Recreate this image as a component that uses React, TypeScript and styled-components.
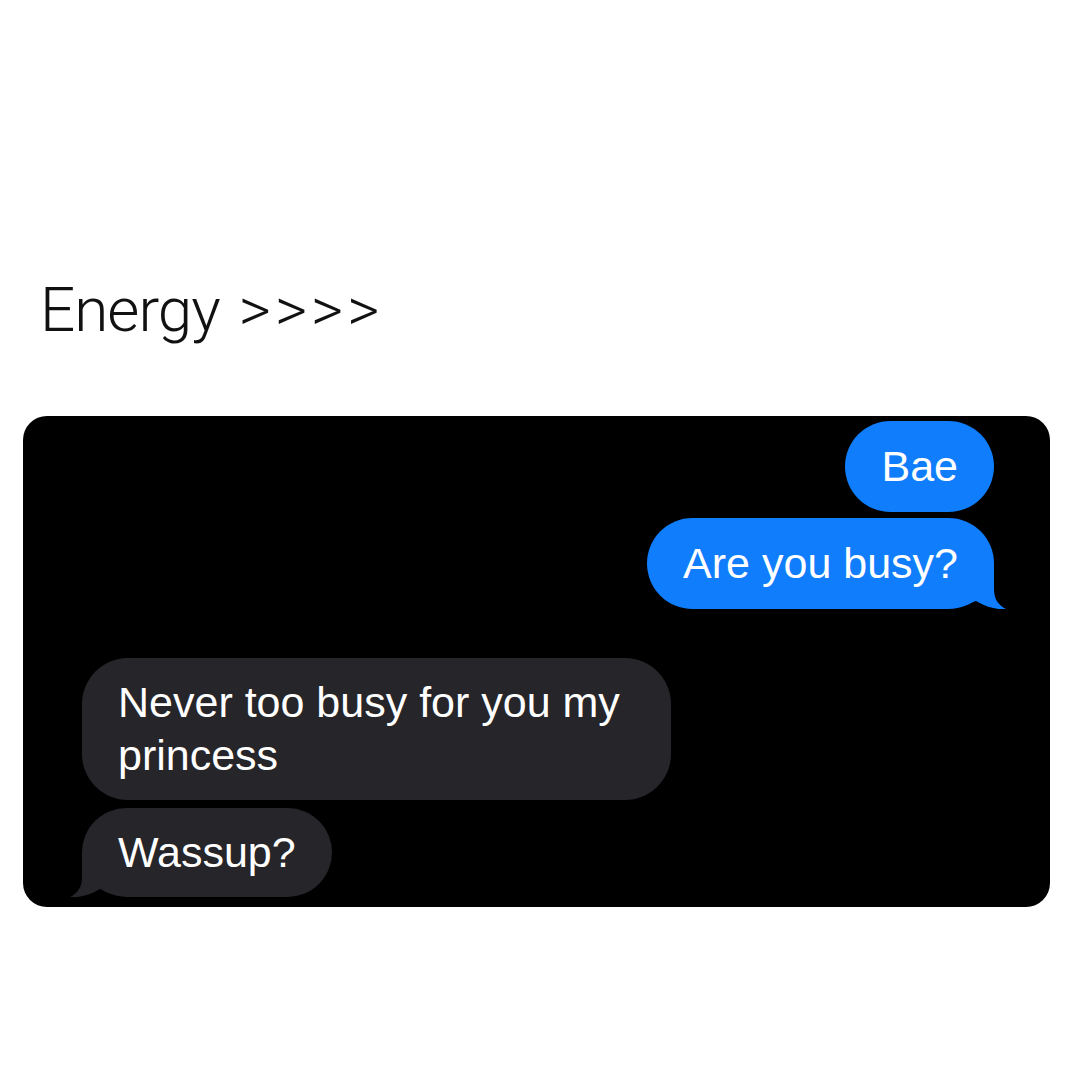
import React from "react";
import styled, { createGlobalStyle } from "styled-components";

const Global = createGlobalStyle`
  html, body { margin: 0; padding: 0; background: #ffffff; }
  body { width: 1080px; height: 1080px; overflow: hidden; }
`;

const Page = styled.div`
  width: 1080px;
  height: 1080px;
  background: #ffffff;
  display: flex;
  flex-direction: column;
  padding: 268px 30px 0 23px;
  box-sizing: border-box;
`;

const Title = styled.h1`
  margin: 0 0 0 17px;
  font-family: Roboto, "Liberation Sans", sans-serif;
  font-weight: 300;
  font-size: 62px;
  line-height: 84px;
  color: #111111;
  letter-spacing: -1px;
  white-space: pre;
`;

const Chevrons = styled.span`
  letter-spacing: 4px;
`;

const Chat = styled.div`
  margin-top: 64px;
  width: 1027px;
  height: 491px;
  background: #000000;
  border-radius: 24px;
  box-sizing: border-box;
  padding: 5px 56px 10px 59px;
  display: flex;
  flex-direction: column;
`;

const Group = styled.div<{ $side: "left" | "right"; $top?: number }>`
  display: flex;
  flex-direction: column;
  align-items: ${(p) => (p.$side === "right" ? "flex-end" : "flex-start")};
  gap: ${(p) => (p.$side === "right" ? 6 : 8)}px;
  margin-top: ${(p) => p.$top ?? 0}px;
`;

const BLUE = "#0f7dfc";
const GRAY = "#262529";

const Bubble = styled.div<{ $me?: boolean; $width?: number }>`
  position: relative;
  box-sizing: border-box;
  background: ${(p) => (p.$me ? BLUE : GRAY)};
  color: #ffffff;
  font-family: "Liberation Sans", Arial, sans-serif;
  font-size: 43px;
  line-height: ${(p) => (p.$me ? 54 : 53)}px;
  padding: ${(p) => (p.$me ? "18px 36px 19px" : "18px 36px 18px")};
  border-radius: 46px;
  ${(p) => (p.$width ? `width: ${p.$width}px;` : "")}
`;

const Tail = styled.svg<{ $side: "left" | "right" }>`
  position: absolute;
  bottom: 0;
  width: 36px;
  height: 44px;
  ${(p) => (p.$side === "right" ? "right: -12px;" : "left: -12px; transform: scaleX(-1);")}
`;

const TailShape = ({ side, color }: { side: "left" | "right"; color: string }) => (
  <Tail $side={side} viewBox="0 0 36 44">
    <path
      d="M0 0 H24 V24 C24 34 28 40 36 44 C27 45 16 42 6 36 L0 38 Z"
      fill={color}
    />
  </Tail>
);

export default function App() {
  return (
    <>
      <Global />
      <Page>
        <Title>
          Energy<Chevrons> &gt;&gt;&gt;&gt;</Chevrons>
        </Title>
        <Chat>
          <Group $side="right">
            <Bubble $me>Bae</Bubble>
            <Bubble $me>
              Are you busy?
              <TailShape side="right" color={BLUE} />
            </Bubble>
          </Group>
          <Group $side="left" $top={49}>
            <Bubble $width={589}>Never too busy for you my princess</Bubble>
            <Bubble>
              Wassup?
              <TailShape side="left" color={GRAY} />
            </Bubble>
          </Group>
        </Chat>
      </Page>
    </>
  );
}
